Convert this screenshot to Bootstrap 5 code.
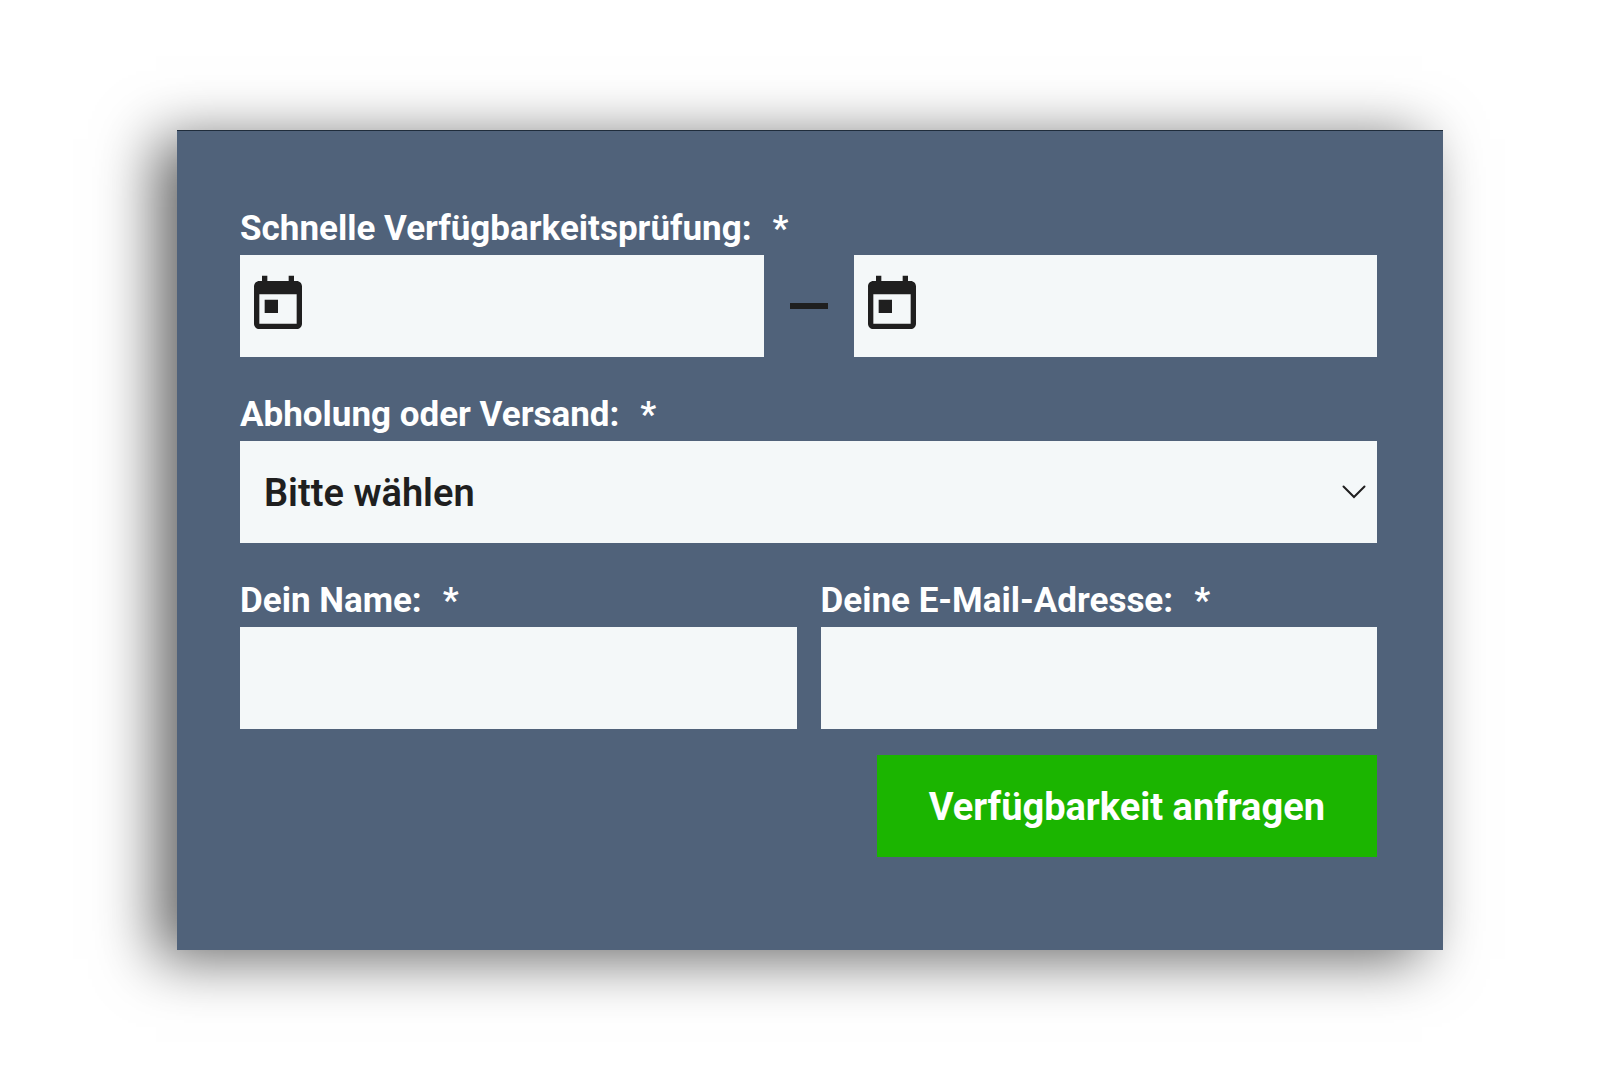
<!DOCTYPE html>
<html lang="de">
<head>
<meta charset="utf-8">
<meta name="viewport" content="width=device-width, initial-scale=1">
<title>Verfügbarkeit anfragen</title>
<link href="https://cdn.jsdelivr.net/npm/bootstrap@5.3.0/dist/css/bootstrap.min.css" rel="stylesheet">
<style>
  body { font-family: Roboto, "Liberation Sans", sans-serif; background: #fff; color: #1f1f1f; }
  .request-panel {
    max-width: 1266px;
    padding: 78px 66px 93px 63px;
    background: #50627a;
    border-top: 1px solid #1f2c3b;
    box-shadow: -21px 9px 56px rgba(0, 0, 0, .6);
  }
  .field-row { margin-bottom: 38px; }
  .field-row-last { margin-bottom: 26px; }
  .field-label { display: block; margin-bottom: 6px; font-size: 35px; line-height: 40px; font-weight: 700; color: #fff; }
  .required-mark { margin-left: 21px; }
  .field-box, .field-box.form-control, .field-box.form-select {
    height: 102px; border: 0; border-radius: 0; background-color: #f4f8f9; color: #1f1f1f;
    font-size: 38px; font-weight: 600;
  }
  .field-box.form-select {
    padding: 3px 48px 0 24px;
    background-image: url("data:image/svg+xml,%3Csvg xmlns='http://www.w3.org/2000/svg' viewBox='0 0 24 14'%3E%3Cpath d='M1.5 1.5 12 12 22.5 1.5' fill='none' stroke='%231f1f1f' stroke-width='2' stroke-linecap='round'/%3E%3C/svg%3E");
    background-position: right 11px center;
    background-size: 24px 14px;
  }
  .date-box { flex: 1 1 0; min-width: 0; padding-left: 6px; }
  .date-box input { min-width: 0; height: 100%; border: 0; background: transparent; font-size: 38px; outline: 0; }
  .date-box:focus-within { box-shadow: 0 0 0 4px rgba(13, 110, 253, .4); }
  .date-icon { width: 64px; height: 64px; margin-bottom: 2px; }
  .date-range { gap: 26px; }
  .range-dash { width: 38px; height: 6px; background: #1f1f1f; }
  .half-field { flex: 1 1 0; min-width: 0; }
  .btn-request {
    width: 44%; height: 102px; padding: 2px 0 0; border: 0; border-radius: 0;
    background: #1bb500; color: #fff; font-size: 38px; font-weight: 700; white-space: nowrap;
  }
  .btn-request:hover { background: #179c00; color: #fff; }
</style>
</head>
<body>
<main class="min-vh-100 d-flex align-items-center justify-content-center">
  <form class="request-panel w-100">
    <div class="field-row">
      <label class="field-label" for="from">Schnelle Verfügbarkeitsprüfung:<span class="required-mark">*</span></label>
      <div class="date-range d-flex align-items-center">
        <div class="field-box date-box d-flex align-items-center">
          <svg class="date-icon flex-shrink-0" viewBox="0 0 24 24" fill="#1f1f1f" aria-hidden="true"><path d="M19 3h-1V1h-2v2H8V1H6v2H5c-1.11 0-1.99.9-1.99 2L3 19c0 1.1.89 2 2 2h14c1.1 0 2-.9 2-2V5c0-1.1-.9-2-2-2zm0 16H5V8h14v11zM7 10h5v5H7z"/></svg>
          <input class="flex-grow-1" id="from" type="text" required>
        </div>
        <span class="range-dash"></span>
        <div class="field-box date-box d-flex align-items-center">
          <svg class="date-icon flex-shrink-0" viewBox="0 0 24 24" fill="#1f1f1f" aria-hidden="true"><path d="M19 3h-1V1h-2v2H8V1H6v2H5c-1.11 0-1.99.9-1.99 2L3 19c0 1.1.89 2 2 2h14c1.1 0 2-.9 2-2V5c0-1.1-.9-2-2-2zm0 16H5V8h14v11zM7 10h5v5H7z"/></svg>
          <input class="flex-grow-1" id="to" type="text" aria-label="Bis" required>
        </div>
      </div>
    </div>
    <div class="field-row">
      <label class="field-label" for="delivery">Abholung oder Versand:<span class="required-mark">*</span></label>
      <select class="form-select field-box" id="delivery" required>
        <option>Bitte wählen</option>
      </select>
    </div>
    <div class="field-row-last d-flex gap-4">
      <div class="half-field">
        <label class="field-label" for="name">Dein Name:<span class="required-mark">*</span></label>
        <input class="form-control field-box" id="name" type="text" required>
      </div>
      <div class="half-field">
        <label class="field-label" for="email">Deine E-Mail-Adresse:<span class="required-mark">*</span></label>
        <input class="form-control field-box" id="email" type="email" required>
      </div>
    </div>
    <div class="d-flex justify-content-end">
      <button class="btn btn-request" type="submit">Verfügbarkeit anfragen</button>
    </div>
  </form>
</main>
<script src="https://cdn.jsdelivr.net/npm/bootstrap@5.3.0/dist/js/bootstrap.bundle.min.js"></script>
</body>
</html>
